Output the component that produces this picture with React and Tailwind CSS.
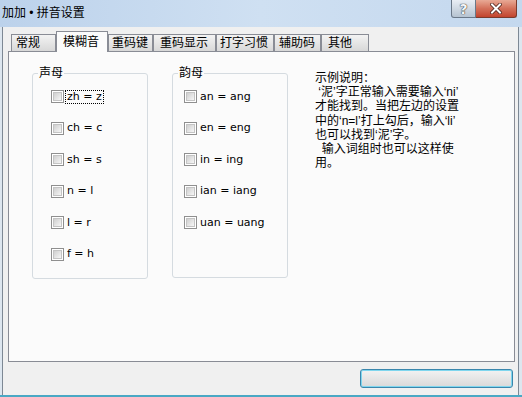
import React from "react";

const tabs = [
  { t: "常规", c: "w-[45px] pl-[4px]" },
  { t: "模糊音", c: "w-[52px] pl-[6px]", sel: true },
  { t: "重码键", c: "w-[45px] pl-[3px]" },
  { t: "重码显示", c: "w-[63px] pl-[6px]" },
  { t: "打字习惯", c: "w-[58px] pl-[3px]" },
  { t: "辅助码", c: "w-[47px] pl-[4px]" },
  { t: "其他", c: "w-[48px] pl-[6px]" },
];

const shengmu = ["zh = z", "ch = c", "sh = s", "n = l", "l = r", "f = h"];
const yunmu = ["an = ang", "en = eng", "in = ing", "ian = iang", "uan = uang"];

function Check() {
  return (
    <span className="flex h-[13px] w-[13px] shrink-0 border border-[#8f8f8f] bg-white p-[1px]">
      <span className="flex-1 border border-[#c4c4c4] bg-gradient-to-br from-[#cfcfcf] to-[#f6f6f6]" />
    </span>
  );
}

function Group({ label, items, h, pl, focus }) {
  return (
    <div className={`relative w-[116px] ${h} rounded-[3px] border border-[#d5dbe0]`}>
      <span className="absolute left-[5px] top-[-8px] bg-[#fbfbfb] px-[1px] text-[12px] leading-[14px] text-black">
        {label}
      </span>
      <div className={`flex flex-col gap-[18.6px] ${pl} pt-[16px]`}>
        {items.map((it, i) => (
          <div key={it} className="flex h-[13px] items-center">
            <Check />
            <span
              className={`ml-[1px] border px-[1px] font-['DejaVu_Sans',sans-serif] text-[11px] leading-[12px] text-black ${
                focus && i === 0 ? "border-dotted border-black" : "border-transparent"
              }`}
            >
              {it}
            </span>
          </div>
        ))}
      </div>
    </div>
  );
}

export default function App() {
  return (
    <div className="flex h-[397px] w-[522px] flex-col overflow-hidden border-b-2 border-[#4aa8c4] bg-[#dde6ef] font-['Liberation_Sans','Noto_Sans_CJK_SC',sans-serif] text-black">
      {/* title bar */}
      <div className="flex h-[27px] shrink-0 items-start justify-between bg-gradient-to-r from-[#bcd2eb] via-[#cfe0f2] to-[#c4d8ee]">
        <div className="pl-[2px] pt-[6px] text-[12px] leading-[14px] text-black">加加 • 拼音设置</div>
        <div className="mr-[5px] flex">
          <div className="flex h-[18px] w-[25px] items-center justify-center rounded-bl-[3px] border border-t-0 border-[#6a7888] bg-gradient-to-b from-[#e9eef4] to-[#b6c3d1]">
            <span className="font-['DejaVu_Sans',sans-serif] text-[14px] font-bold leading-[14px] text-[#f4f6f8] [text-shadow:0_0_1px_#222,0_0_1px_#222]">
              ?
            </span>
          </div>
          <div className="flex h-[18px] w-[41px] items-center justify-center rounded-br-[3px] border border-l-0 border-t-0 border-[#7a3a2c] bg-gradient-to-b from-[#e8a995] via-[#d3705a] to-[#c2432c]">
            <svg width="12" height="11" viewBox="0 0 12 11">
              <path d="M2 1.5 L10 9.5 M10 1.5 L2 9.5" stroke="#4a2018" strokeWidth="3.6" strokeLinecap="square" />
              <path d="M2 1.5 L10 9.5 M10 1.5 L2 9.5" stroke="#ffffff" strokeWidth="2" strokeLinecap="square" />
            </svg>
          </div>
        </div>
      </div>

      {/* body */}
      <div className="ml-[2px] mr-[3px] flex flex-1 flex-col border-l border-r border-[#7d8894] bg-[#f0f0f0] pl-[5px] pt-[4px]">
        {/* tab strip */}
        <div className="relative z-10 ml-[3px] flex h-[20px] items-end">
          {tabs.map((tab) =>
            tab.sel ? (
              <div
                key={tab.t}
                className={`${tab.c} -mb-[1px] flex h-[21px] items-center border border-b-0 border-[#898c95] bg-[#fbfbfb] text-[12px] leading-[14px]`}
              >
                {tab.t}
              </div>
            ) : (
              <div
                key={tab.t}
                className={`${tab.c} flex h-[17px] items-center border border-b-0 border-[#898c95] bg-gradient-to-b from-[#f3f3f3] to-[#d8d8d8] text-[12px] leading-[14px]`}
              >
                {tab.t}
              </div>
            )
          )}
        </div>

        {/* panel */}
        <div className="flex h-[311px] w-[507px] items-start border border-[#898c95] bg-[#fbfbfb] pl-[23px]">
          <div className="mt-[21px]">
            <Group label="声母" items={shengmu} h="h-[206px]" pl="pl-[18px]" focus />
          </div>
          <div className="ml-[24px] mt-[21px]">
            <Group label="韵母" items={yunmu} h="h-[205px]" pl="pl-[11px]" />
          </div>
          <div className="ml-[27px] mt-[19px] whitespace-pre text-[12px] leading-[14.2px] text-black">
            <div>示例说明：</div>
            <div> ‘泥’字正常输入需要输入‘ni’</div>
            <div>才能找到。当把左边的设置</div>
            <div>中的‘n=l’打上勾后，输入‘li’</div>
            <div>也可以找到‘泥’字。</div>
            <div>  输入词组时也可以这样使</div>
            <div>用。</div>
          </div>
        </div>

        {/* bottom button */}
        <div className="mt-[7px] flex justify-end pr-[5px]">
          <div className="h-[19px] w-[153px] rounded-[3px] border border-[#3a86ac] bg-gradient-to-b from-[#f2f2f2] to-[#d9d9d9] shadow-[inset_0_0_0_1px_#7fd6ee]" />
        </div>
      </div>
    </div>
  );
}
